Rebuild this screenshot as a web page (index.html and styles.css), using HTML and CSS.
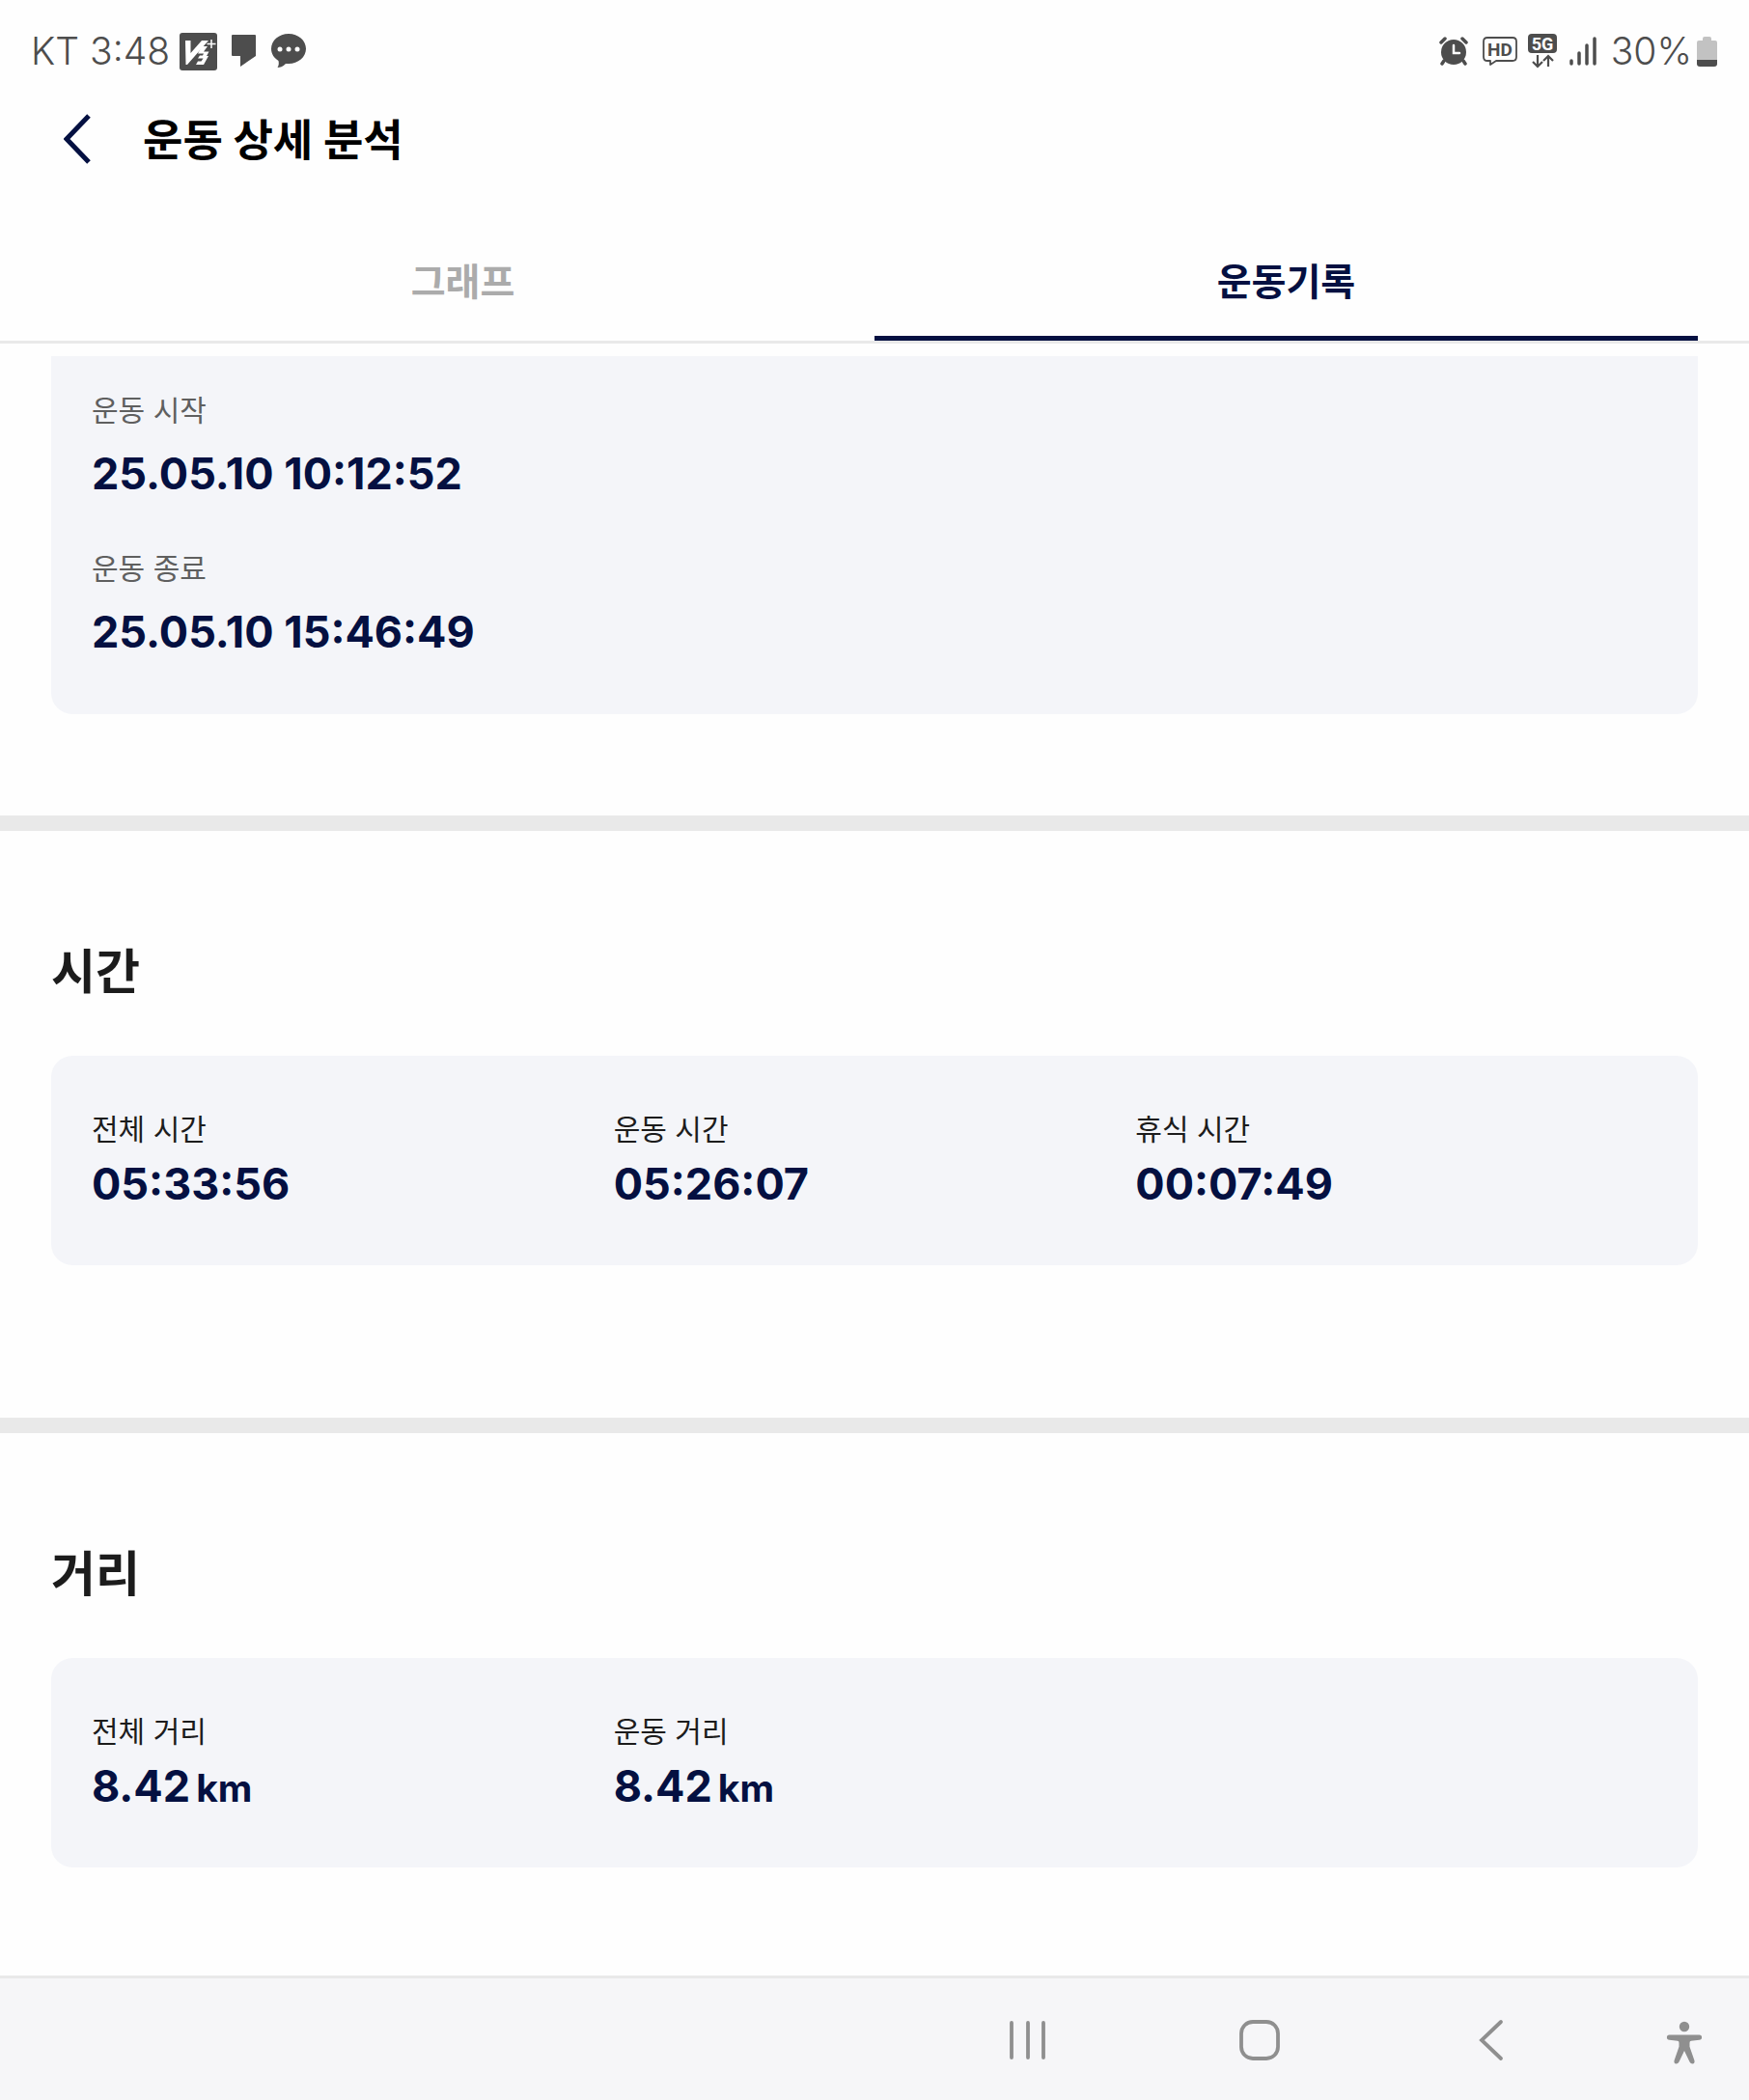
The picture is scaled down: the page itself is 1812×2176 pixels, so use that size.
FILE: index.html
```
<!DOCTYPE html>
<html lang="ko">
<head>
    <meta charset="UTF-8">
    <meta name="viewport" content="width=device-width, initial-scale=1.0">
    <title>운동 상세 분석</title>
    <link rel="stylesheet" href="styles.css">
</head>
<body>
    <div class="status-bar">
        <div class="status-left">
            <span class="status-text">KT 3:48</span>
            <svg class="icon-v3" width="39" height="39" viewBox="0 0 39 39">
                <rect width="39" height="39" rx="3" fill="#4d4d4d"/>
                <path d="M6 8h5.500v13L23 8h7L8 33H6.500z" fill="#fff"/>
                <path d="M23 14h6l-4 5.500h5.500L28 24h2l-5 9h-8l2-3.500h3.500l2-3H19l2-3h3l1-2h-6z" fill="#fff"/>
                <path d="M33 7v9M28.500 11.500h9" stroke="#fff" stroke-width="1.500"/>
            </svg>
            <svg class="icon-flag" width="25" height="34" viewBox="0 0 25 34">
                <path d="M1 0h23q1 0 1 1v21L9 33V22H1q-1 0-1-1V1q0-1 1-1z" fill="#4d4d4d"/>
            </svg>
            <svg class="icon-chat" width="36" height="36" viewBox="0 0 36 36">
                <path d="M18 0c10 0 18 7 18 15.500s-8 15.500-18 15.500l-3 0C12 34 9 35 6.500 35C8 33 8 30 7.500 28C3 25 0 21 0 15.500C0 7 8 0 18 0z" fill="#4d4d4d"/>
                <circle cx="9" cy="16" r="2.500" fill="#fff"/>
                <circle cx="18" cy="16" r="2.500" fill="#fff"/>
                <circle cx="27" cy="16" r="2.500" fill="#fff"/>
            </svg>
        </div>
        <div class="status-right">
            <svg width="30" height="30" viewBox="0 0 30 30">
                <circle cx="15" cy="16" r="13" fill="#4d4d4d"/>
                <path d="M2 6l4-4M28 6l-4-4M5 25l-2 3M25 25l2 3" stroke="#4d4d4d" stroke-width="3.500" stroke-linecap="round"/>
                <path d="M15 9v8h6" fill="none" stroke="#fff" stroke-width="2.500" stroke-linecap="round"/>
            </svg>
            <svg class="icon-hd" width="36" height="30" viewBox="0 0 36 30">
                <path d="M5 1h26q4 0 4 4v16q0 4-4 4H14l-6 4v-4H5q-4 0-4-4V5q0-4 4-4z" fill="none" stroke="#4d4d4d" stroke-width="1.800" stroke-linejoin="round"/>
                <text x="18" y="20" class="badge">HD</text>
            </svg>
            <svg class="icon-5g" width="30" height="36" viewBox="0 0 30 36">
                <rect width="30" height="20" rx="4" fill="#4d4d4d"/>
                <text x="15" y="17" class="badge badge-5g">5G</text>
                <path d="M10 22v11M5 29l5 5 5-5M21 34V23M16 28l5-5 5 5" fill="none" stroke="#4d4d4d" stroke-width="2.200"/>
            </svg>
            <svg class="icon-signal" width="28" height="30" viewBox="0 0 28 30">
                <path d="M2 25v3M10 17v11M18 9v19M26 2v26" stroke="#4d4d4d" stroke-width="3.500" stroke-linecap="round"/>
            </svg>
            <span class="status-text">30%</span>
            <svg class="icon-battery" width="21" height="31" viewBox="0 0 21 31">
                <path d="M6 4V2q0-2 2-2h5q2 0 2 2v2h4q2 0 2 2v18H0V6q0-2 2-2z" fill="#c2c2c2"/>
                <path d="M0 24h21v4q0 3-3 3H3q-3 0-3-3z" fill="#4d4d4d"/>
            </svg>
        </div>
    </div>

    <header class="app-header">
        <button class="back-button" type="button" aria-label="뒤로">
            <svg width="28" height="52" viewBox="0 0 28 52">
                <path d="M26 2L3 26l23 24" fill="none" stroke="#041041" stroke-width="5"/>
            </svg>
        </button>
        <h1>운동 상세 분석</h1>
    </header>

    <nav class="tabs">
        <button class="tab" type="button">그래프</button>
        <button class="tab active" type="button">운동기록</button>
    </nav>

    <main>
        <section class="section-period">
            <dl class="card card-period">
                <div class="period">
                    <dt>운동 시작</dt>
                    <dd>25.05.10 10:12:52</dd>
                </div>
                <div class="period">
                    <dt>운동 종료</dt>
                    <dd>25.05.10 15:46:49</dd>
                </div>
            </dl>
        </section>

        <section class="section">
            <h2>시간</h2>
            <dl class="card card-grid">
                <div>
                    <dt>전체 시간</dt>
                    <dd>05:33:56</dd>
                </div>
                <div>
                    <dt>운동 시간</dt>
                    <dd>05:26:07</dd>
                </div>
                <div>
                    <dt>휴식 시간</dt>
                    <dd>00:07:49</dd>
                </div>
            </dl>
        </section>

        <section class="section">
            <h2>거리</h2>
            <dl class="card card-grid">
                <div>
                    <dt>전체 거리</dt>
                    <dd>8.42<span class="unit">km</span></dd>
                </div>
                <div>
                    <dt>운동 거리</dt>
                    <dd>8.42<span class="unit">km</span></dd>
                </div>
            </dl>
        </section>
    </main>

    <footer class="system-nav">
        <button type="button" aria-label="최근 앱">
            <svg width="48" height="48" viewBox="0 0 48 48">
                <path d="M7 5v36M24 5v36M40 5v36" stroke="#8f8f8f" stroke-width="3.800" stroke-linecap="round"/>
            </svg>
        </button>
        <button type="button" aria-label="홈">
            <svg width="48" height="48" viewBox="0 0 48 48">
                <rect x="5" y="4" width="38" height="38" rx="12" fill="none" stroke="#8f8f8f" stroke-width="3.800"/>
            </svg>
        </button>
        <button type="button" aria-label="뒤로 가기">
            <svg width="48" height="48" viewBox="0 0 48 48">
                <path d="M34 4L14 23l20 19" fill="none" stroke="#8f8f8f" stroke-width="3.800" stroke-linecap="round"/>
            </svg>
        </button>
        <button class="accessibility" type="button" aria-label="접근성">
            <svg width="48" height="48" viewBox="0 0 48 48">
                <circle cx="24" cy="9" r="5.200" fill="#8f8f8f"/>
                <path d="M8.500 17.500h31a2.600 2.600 0 0 1 0 5.200l-8.500 1q-1.500 0-1.500 2v4l5 14.500q.5 3-2 3.300-2 0-3-2L24 34l-5.500 11.500q-1 2-3 2-2.500-.3-2-3.300l5-14.500v-4q0-2-1.500-2l-8.500-1a2.600 2.600 0 0 1 0-5.200z" fill="#8f8f8f"/>
            </svg>
        </button>
    </footer>
</body>
</html>
```
FILE: styles.css
```
* {
    box-sizing: border-box;
}

body {
    font-family: Inter, "Noto Sans CJK KR", sans-serif;
    background-color: #fefefe;
    color: #1c1c1c;
    display: flex;
    flex-direction: column;
    min-height: 100vh;
    margin: 0;
}

h1, h2, dl, dd {
    margin: 0;
}

button {
    background: none;
    border: none;
    padding: 0;
    font-family: inherit;
    cursor: pointer;
}

svg {
    display: block;
    flex-shrink: 0;
}

/* 상태 표시줄 */
.status-bar {
    display: flex;
    justify-content: space-between;
    height: 106px;
    padding: 0 33px 0 32px;
    color: #4d4d4d;
}

.status-left,
.status-right {
    display: flex;
    align-items: center;
}

.status-text {
    font-size: 39px;
    font-weight: 300;
    line-height: 48px;
}

.icon-v3 { margin-left: 10px; }
.icon-flag { margin-left: 15px; }
.icon-chat { margin-left: 16px; }
.icon-hd { margin-left: 15px; }
.icon-5g { margin: 0 13px 0 11px; }
.icon-signal { margin-right: 15px; }
.icon-battery { margin-left: 5px; }

.badge {
    font-family: Roboto, sans-serif;
    font-weight: 700;
    font-size: 19px;
    text-anchor: middle;
    fill: #4d4d4d;
}

.badge-5g {
    font-size: 18px;
    fill: #fff;
}

/* 글자 상자가 아이콘 밖으로 나가도 잘리지 않게 */
.icon-hd,
.icon-5g {
    overflow: visible;
}

/* 헤더 */
.app-header {
    display: flex;
    align-items: center;
    height: 76px;
    padding: 0 66px;
    gap: 54px;
}

.app-header h1 {
    padding-top: 4px;
    font-size: 45px;
    line-height: 64px;
    font-weight: 700;
    color: #000;
}

/* 탭 */
.tabs {
    display: flex;
    height: 174px;
    padding: 0 53px;
    border-bottom: 3px solid #e9e9e9;
}

.tab {
    flex: 1;
    padding-top: 53px;
    border-bottom: 5px solid transparent;
    font-size: 39px;
    line-height: 60px;
    font-weight: 700;
    color: #ababab;
}

.tab.active {
    color: #041041;
    border-color: #041041;
}

/* 본문 */
main {
    flex: 1;
}

.section-period {
    padding: 13px 53px 105px;
}

.section {
    border-top: 16px solid #e9e9e9;
    padding: 110px 53px 158px;
}

.section:last-child {
    padding-bottom: 112px;
}

.section h2 {
    font-size: 50px;
    line-height: 72px;
    font-weight: 700;
    margin-bottom: 51px;
}

.card {
    background-color: #f4f5f9;
    border-radius: 22px;
    padding: 54px 42px 52px;
}

.card-period {
    display: grid;
    gap: 44px;
    padding: 34px 42px 53px;
    border-radius: 0 0 22px 22px;
}

.card-grid {
    display: grid;
    grid-template-columns: repeat(3, 1fr);
}

dt {
    font-size: 30px;
    line-height: 44px;
    margin-bottom: 3px;
}

dd {
    font-size: 45px;
    line-height: 64px;
    font-weight: 700;
    color: #041041;
}

.period dt {
    color: #5f5f5f;
    margin-bottom: 12px;
}

.unit {
    font-size: 39px;
    line-height: 48px;
    margin-left: 6px;
}

/* 시스템 내비게이션 */
.system-nav {
    display: flex;
    justify-content: flex-end;
    align-items: center;
    gap: 192px;
    height: 129px;
    padding: 4px 43px 0;
    background-color: #f6f6f8;
    border-top: 3px solid #e9e9e9;
}

.system-nav .accessibility {
    margin-left: -40px;
}
```
